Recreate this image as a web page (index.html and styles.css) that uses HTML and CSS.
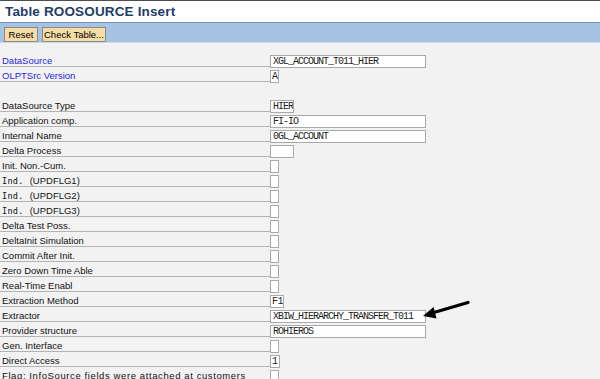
FILE: index.html
```html
<!DOCTYPE html>
<html>
<head>
<meta charset="utf-8">
<link rel="stylesheet" href="styles.css">
</head>
<body>
<div class="page">
  <div class="topline"></div>
  <div class="titlebar">Table ROOSOURCE Insert</div>
  <div class="toolbar">
    <button class="btn btn-reset">Reset</button>
    <button class="btn btn-check">Check Table...</button>
  </div>
  <div class="form">
    <div class="row"><div class="label key">DataSource</div><div class="field w-wide">XGL_ACCOUNT_T011_HIER</div></div>
    <div class="row"><div class="label key">OLPTSrc Version</div><div class="field w-9">A</div></div>
    <div class="row blank"></div>
    <div class="row"><div class="label">DataSource Type</div><div class="field w-24">HIER</div></div>
    <div class="row"><div class="label">Application comp.</div><div class="field w-wide">FI-IO</div></div>
    <div class="row"><div class="label">Internal Name</div><div class="field w-wide">0GL_ACCOUNT</div></div>
    <div class="row"><div class="label">Delta Process</div><div class="field w-24"></div></div>
    <div class="row"><div class="label">Init. Non.-Cum.</div><div class="field w-9"></div></div>
    <div class="row"><div class="label"><span class="ind">Ind.</span>(UPDFLG1)</div><div class="field w-9"></div></div>
    <div class="row"><div class="label"><span class="ind">Ind.</span>(UPDFLG2)</div><div class="field w-9"></div></div>
    <div class="row"><div class="label"><span class="ind">Ind.</span>(UPDFLG3)</div><div class="field w-9"></div></div>
    <div class="row"><div class="label">Delta Test Poss.</div><div class="field w-9"></div></div>
    <div class="row"><div class="label">DeltaInit Simulation</div><div class="field w-9"></div></div>
    <div class="row"><div class="label">Commit After Init.</div><div class="field w-9"></div></div>
    <div class="row"><div class="label">Zero Down Time Able</div><div class="field w-9"></div></div>
    <div class="row"><div class="label">Real-Time Enabl</div><div class="field w-9"></div></div>
    <div class="row"><div class="label">Extraction Method</div><div class="field w-13">F1</div></div>
    <div class="row"><div class="label">Extractor</div><div class="field w-wide">XBIW_HIERARCHY_TRANSFER_T011</div></div>
    <div class="row"><div class="label">Provider structure</div><div class="field w-wide">ROHIEROS</div></div>
    <div class="row"><div class="label">Gen. Interface</div><div class="field w-9"></div></div>
    <div class="row"><div class="label">Direct Access</div><div class="field w-10">1</div></div>
    <div class="row"><div class="label wide-text">Flag: InfoSource fields were attached at customers</div><div class="field w-9"></div></div>
  </div>
  <svg class="arrow" width="600" height="379" viewBox="0 0 600 379">
    <line x1="468" y1="302.5" x2="433" y2="312.8" stroke="#000" stroke-width="3.2" stroke-linecap="round"/>
    <polygon points="423,316 433.5,307 436.5,318.5" fill="#000"/>
  </svg>
</div>
</body>
</html>
```
FILE: styles.css
```css
html, body {
  margin: 0;
  padding: 0;
  background: #f2f2f2;
  overflow: hidden;
}
.page {
  position: relative;
  width: 600px;
  height: 379px;
  overflow: hidden;
  font-family: "Liberation Sans", Arial, sans-serif;
}
.topline {
  height: 1px;
  background: #4d4d4d;
}
.titlebar {
  height: 22px;
  background: #ffffff;
  color: #1f3c6b;
  font-weight: bold;
  font-size: 13.5px;
  letter-spacing: 0.15px;
  line-height: 21px;
  padding-left: 5px;
  border-bottom: 1px solid #7593bd;
  box-sizing: border-box;
}
.toolbar {
  height: 20px;
  background: #a6c3e4;
  display: flex;
  align-items: flex-start;
  gap: 4px;
  padding: 4px 0 0 4px;
  box-sizing: border-box;
  border-bottom: 1px solid #c9d9ec;
}
.btn {
  margin: 0;
  height: 15px;
  padding: 0;
  background: #f4dca4;
  border: 1px solid #8a8a8a;
  font-family: "Liberation Sans", Arial, sans-serif;
  font-size: 9.5px;
  color: #000;
  line-height: 13px;
}
.btn-reset { width: 34px; }
.btn-check { width: 64px; }
.form {
  padding-top: 9px;
}
.row {
  display: flex;
  height: 15px;
}
.label {
  width: 270px;
  height: 15px;
  box-sizing: border-box;
  border-bottom: 1px solid #b3b3b3;
  font-size: 9.5px;
  line-height: 11px;
  padding: 3px 0 0 2px;
  color: #111;
  white-space: nowrap;
  flex: none;
}
.label.key {
  color: #2727e0;
}
.label.wide-text {
  letter-spacing: 0.6px;
}
.ind {
  font-family: "DejaVu Sans Mono", monospace;
  font-size: 8.5px;
  letter-spacing: 0.3px;
  margin-right: 6px;
}
.row.blank {
  height: 15px;
}
.field {
  margin-top: 3px;
  height: 13px;
  box-sizing: border-box;
  background: #fff;
  border: 1px solid #a9a9a9;
  font-family: "Liberation Mono", "DejaVu Sans Mono", monospace;
  font-size: 10px;
  letter-spacing: -1px;
  line-height: 11px;
  padding-left: 2px;
  color: #222;
  white-space: nowrap;
  overflow: hidden;
  flex: none;
}
.w-wide { width: 156px; }
.w-24 { width: 24px; }
.w-13 { width: 14px; padding-left: 1px; letter-spacing: -0.5px; }
.w-10 { width: 10px; padding-left: 1px; }
.w-9 { width: 9px; padding-left: 1px; }
.arrow {
  position: absolute;
  left: 0;
  top: 0;
  pointer-events: none;
}
```
